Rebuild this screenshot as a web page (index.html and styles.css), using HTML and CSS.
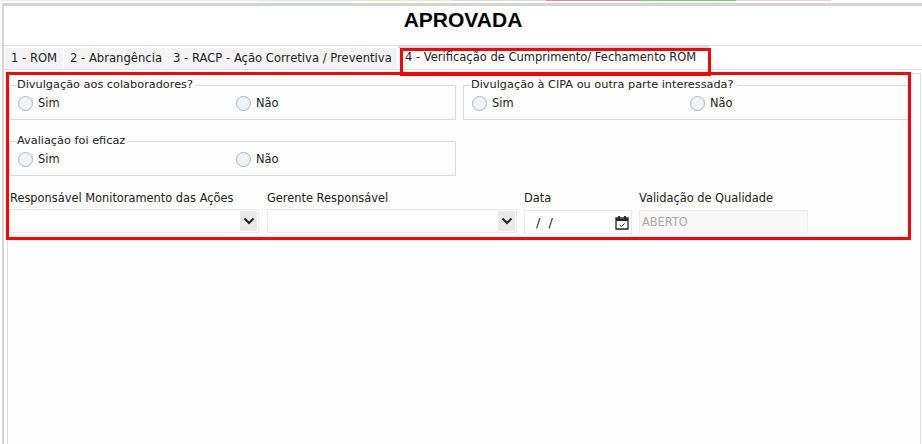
FILE: index.html

```html
<!DOCTYPE html>
<html lang="en">

<head>
    <meta charset="UTF-8">
    <meta name="viewport" content="width=device-width, initial-scale=1.0">
    <title>ROM</title>
    <link rel="stylesheet" href="styles.css">
</head>

<body>
    <div class="top-strip">
        <span class="seg seg-blank"></span>
        <span class="seg seg-blue"></span>
        <span class="seg seg-cream"></span>
        <span class="seg seg-green"></span>
        <span class="seg seg-red"></span>
        <span class="seg seg-strong-green"></span>
        <span class="seg seg-pink"></span>
    </div>

    <div class="page">
        <h1 class="status">APROVADA</h1>

        <ul class="tabs">
            <li class="tab-1">1 - ROM</li>
            <li class="tab-2">2 - Abrangência</li>
            <li class="tab-3">3 - RACP - Ação Corretiva / Preventiva</li>
            <li class="active">4 - Verificação de Cumprimento/ Fechamento ROM</li>
        </ul>

        <section class="tab-body">
            <div class="row row-first">
                <fieldset class="group group-a">
                    <legend>Divulgação aos colaboradores?</legend>
                    <label class="radio"><span class="dot"></span>Sim</label>
                    <label class="radio"><span class="dot"></span>Não</label>
                </fieldset>
                <fieldset class="group group-b">
                    <legend>Divulgação à CIPA ou outra parte interessada?</legend>
                    <label class="radio"><span class="dot"></span>Sim</label>
                    <label class="radio"><span class="dot"></span>Não</label>
                </fieldset>
            </div>

            <div class="row row-second">
                <fieldset class="group group-c">
                    <legend>Avaliação foi eficaz</legend>
                    <label class="radio"><span class="dot"></span>Sim</label>
                    <label class="radio"><span class="dot"></span>Não</label>
                </fieldset>
            </div>

            <div class="fields">
                <div class="field field-resp">
                    <label>Responsável Monitoramento das Ações</label>
                    <div class="input select">
                        <span class="arrow">
                            <svg width="12" height="8" viewBox="0 0 12 8"><path d="M1.500 1.500 6 6l4.500-4.500" fill="none" stroke="#222" stroke-width="2"/></svg>
                        </span>
                    </div>
                </div>
                <div class="field field-gerente">
                    <label>Gerente Responsável</label>
                    <div class="input select">
                        <span class="arrow">
                            <svg width="12" height="8" viewBox="0 0 12 8"><path d="M1.500 1.500 6 6l4.500-4.500" fill="none" stroke="#222" stroke-width="2"/></svg>
                        </span>
                    </div>
                </div>
                <div class="field field-data">
                    <label>Data</label>
                    <div class="input date">
                        <span class="date-text"><span>/</span><span>/</span></span>
                        <svg width="14" height="15" viewBox="0 0 14 15"><path d="M1 3h12v11H1z" fill="none" stroke="#222" stroke-width="1.300"/><path d="M1 5h12" stroke="#222" stroke-width="2"/><path d="M4 1v3M10 1v3" stroke="#222" stroke-width="1.800"/><path d="M4.500 10l2 1.500 3-3" fill="none" stroke="#222"/></svg>
                    </div>
                </div>
                <div class="field field-valid">
                    <label>Validação de Qualidade</label>
                    <div class="input readonly">ABERTO</div>
                </div>
            </div>
        </section>

        <!-- red marks drawn over the screen -->
        <div class="mark mark-tab"></div>
        <div class="mark mark-form"></div>
    </div>
</body>

</html>
```

FILE: styles.css

```css
/* General styles */
* {
    margin: 0;
    padding: 0;
    box-sizing: border-box;
}

html,
body {
    height: 444px;
    overflow: hidden;
}

body {
    font-family: 'DejaVu Sans', Verdana, sans-serif;
    font-size: 11.4px;
    color: #222;
    background-color: #fff;
}

/* Colour strip on top */
.top-strip {
    display: flex;
    height: 3px;
}

.seg {
    height: 1px;
}

.seg-blank {
    width: 260px;
    background-color: #ececec;
}

.seg-blue {
    width: 96px;
    background-color: #d6ebf2;
}

.seg-cream {
    width: 95px;
    background-color: #f2e8cc;
}

.seg-green {
    width: 95px;
    background-color: #c6ebc6;
}

.seg-red {
    width: 95px;
    background-color: #e08a8a;
}

.seg-strong-green {
    width: 95px;
    background-color: #6fd06f;
}

.seg-pink {
    width: 95px;
    background-color: #f5cfcf;
}

.page {
    position: relative;
    height: 441px;
    margin-left: 2px;
    border-top: 3px solid #d4d4d4;
    border-left: 2px solid #d4d4d4;
}

.status {
    height: 39px;
    padding-top: 2px;
    font-family: 'Liberation Sans', Arial, sans-serif;
    font-size: 21px;
    line-height: 24px;
    text-align: center;
    color: #000;
}

/* Tabs */
.tabs {
    display: flex;
    list-style-type: none;
    height: 25px;
    padding: 2px 0 0 1px;
    border-top: 1px solid #ddd;
    border-bottom: 1px solid #ddd;
    font-size: 11.6px;
}

.tabs li {
    height: 21px;
    padding-left: 6px;
    margin-right: 1px;
    line-height: 21px;
    white-space: nowrap;
    background-color: #f3f3f3;
}

.tab-1 {
    width: 58px;
}

.tab-2 {
    width: 102px;
}

.tab-3 {
    width: 230px;
}

.tabs li.active {
    width: 311px;
    height: 23px;
    margin-top: -2px;
    padding-left: 7px;
    border-top: 2px solid #ddd;
    font-size: 11.5px;
    line-height: 18px;
    background-color: #fff;
}

/* Tab content */
.tab-body {
    width: 914px;
    height: 371px;
    margin: 3px 0 0 3px;
    border: 1px solid #ddd;
    border-bottom: none;
    background-color: #fdfdfd;
}

.row {
    display: flex;
}

.row-first {
    padding: 4px 0 0 1px;
    gap: 7px;
}

.row-second {
    padding: 14px 0 0 1px;
}

.group {
    display: flex;
    height: 42px;
    padding: 2px 0 0 8px;
    border: 1px solid #d8d8d8;
    min-width: 0;
}

.group legend {
    margin-left: -1px;
    padding-right: 3px;
    font-size: 11.3px;
    line-height: 14px;
}

.group-a,
.group-c {
    width: 447px;
}

.group-b {
    width: 446px;
}

.radio {
    display: flex;
    align-items: center;
    gap: 5px;
    width: 218px;
    height: 18px;
}

.dot {
    width: 15px;
    height: 15px;
    border: 1px solid #a6b6c6;
    border-radius: 50%;
    background-color: #f1f2f5;
}

/* Bottom fields */
.fields {
    display: flex;
    padding: 13px 0 0 2px;
}

.field label {
    display: block;
    height: 20px;
    line-height: 18px;
    white-space: nowrap;
}

.field-resp,
.field-gerente {
    width: 257px;
}

.field-data {
    width: 115px;
}

.field-valid {
    width: 169px;
}

.input {
    display: flex;
    align-items: center;
    justify-content: flex-end;
    height: 24px;
    background-color: #fff;
    border: 1px solid #e8e8e8;
}

.field-resp .input {
    width: 249px;
}

.field-gerente .input {
    width: 250px;
}

.field-data .input,
.field-valid .input {
    margin-top: 1px;
}

.field-data .input {
    width: 108px;
    padding-right: 2px;
}

.arrow {
    display: flex;
    align-items: center;
    justify-content: center;
    width: 17px;
    height: 20px;
    margin-right: 1px;
    background-color: #e9e9e9;
}

.date-text {
    display: flex;
    flex: 1;
    gap: 8px;
    padding-left: 11px;
    font-size: 13px;
}

.readonly {
    justify-content: flex-start;
    padding-left: 2px;
    color: #a8a8a8;
    background-color: #f8f8f8;
    border-color: #eee;
}

/* Red annotations */
.mark {
    position: absolute;
    border: 3px solid #f00;
}

.mark-tab {
    left: 396px;
    top: 42px;
    width: 311px;
    height: 28px;
}

.mark-form {
    left: 2px;
    top: 66px;
    width: 905px;
    height: 168px;
}
```
